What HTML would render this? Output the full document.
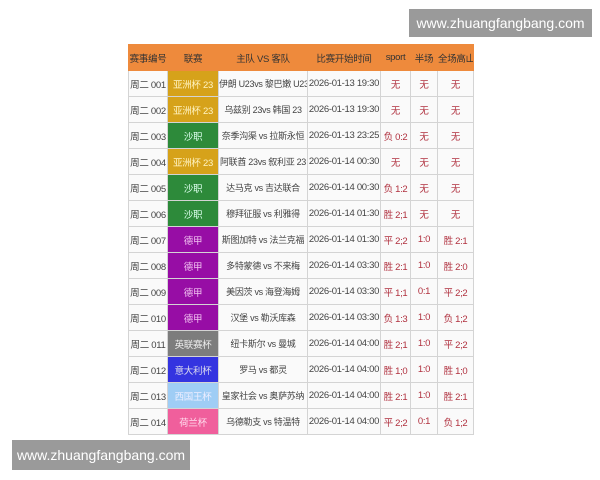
<!DOCTYPE html>
<html><head><meta charset="utf-8"><style>
body{margin:0;width:600px;height:480px;background:#fff;position:relative;overflow:hidden;font-family:"Liberation Sans","Noto Sans CJK SC",sans-serif}
table{position:absolute;left:128px;top:44px;width:345px;border-collapse:collapse;table-layout:fixed;font-size:9.5px;letter-spacing:-0.3px;color:#444}
td{border:1px solid #d4d4d4;height:25px;padding:0;text-align:center;white-space:nowrap;overflow:hidden;background:#fafafa}
td:nth-child(3){font-size:9px}
tr.h td{background:#ee8a3c;color:#333;border-color:#ee8a3c;height:25px}
tr.h td:nth-child(3){font-size:9.5px}
td.r{color:#b0303e}
.y{background:#d6a21a!important;color:#fff3c0}
.g{background:#2d8a3a!important;color:#dfe}
.p{background:#970da5!important;color:#f0c0f0}
.gr{background:#7d7d7d!important;color:#eee}
.b{background:#3434e0!important;color:#dde}
.lb{background:#9fcdf5!important;color:#eef}
.pk{background:#f05f9c!important;color:#fde}
.wm{position:absolute;background:#9a9a9a;color:#fff;font-size:14px;display:flex;align-items:center;justify-content:center}
</style></head><body>
<table>
<colgroup><col style="width:39px"><col style="width:51px"><col style="width:89px"><col style="width:73px"><col style="width:30px"><col style="width:27px"><col style="width:36px"></colgroup>
<tr class="h"><td>赛事编号</td><td>联赛</td><td>主队 VS 客队</td><td>比赛开始时间</td><td>sport</td><td>半场</td><td>全场高山</td></tr>
<tr><td>周二 001</td><td class="y">亚洲杯 23</td><td>伊朗 U23vs 黎巴嫩 U23</td><td>2026-01-13 19:30</td><td class="r">无</td><td class="r">无</td><td class="r">无</td></tr>
<tr><td>周二 002</td><td class="y">亚洲杯 23</td><td>乌兹别 23vs 韩国 23</td><td>2026-01-13 19:30</td><td class="r">无</td><td class="r">无</td><td class="r">无</td></tr>
<tr><td>周二 003</td><td class="g">沙职</td><td>奈季沟渠 vs 拉斯永恒</td><td>2026-01-13 23:25</td><td class="r">负 0:2</td><td class="r">无</td><td class="r">无</td></tr>
<tr><td>周二 004</td><td class="y">亚洲杯 23</td><td>阿联酋 23vs 叙利亚 23</td><td>2026-01-14 00:30</td><td class="r">无</td><td class="r">无</td><td class="r">无</td></tr>
<tr><td>周二 005</td><td class="g">沙职</td><td>达马克 vs 吉达联合</td><td>2026-01-14 00:30</td><td class="r">负 1:2</td><td class="r">无</td><td class="r">无</td></tr>
<tr><td>周二 006</td><td class="g">沙职</td><td>穆拜征服 vs 利雅得</td><td>2026-01-14 01:30</td><td class="r">胜 2;1</td><td class="r">无</td><td class="r">无</td></tr>
<tr><td>周二 007</td><td class="p">德甲</td><td>斯图加特 vs 法兰克福</td><td>2026-01-14 01:30</td><td class="r">平 2;2</td><td class="r">1:0</td><td class="r">胜 2:1</td></tr>
<tr><td>周二 008</td><td class="p">德甲</td><td>多特蒙德 vs 不来梅</td><td>2026-01-14 03:30</td><td class="r">胜 2:1</td><td class="r">1:0</td><td class="r">胜 2:0</td></tr>
<tr><td>周二 009</td><td class="p">德甲</td><td>美因茨 vs 海登海姆</td><td>2026-01-14 03:30</td><td class="r">平 1;1</td><td class="r">0:1</td><td class="r">平 2;2</td></tr>
<tr><td>周二 010</td><td class="p">德甲</td><td>汉堡 vs 勒沃库森</td><td>2026-01-14 03:30</td><td class="r">负 1:3</td><td class="r">1:0</td><td class="r">负 1;2</td></tr>
<tr><td>周二 011</td><td class="gr">英联赛杯</td><td>纽卡斯尔 vs 曼城</td><td>2026-01-14 04:00</td><td class="r">胜 2;1</td><td class="r">1:0</td><td class="r">平 2;2</td></tr>
<tr><td>周二 012</td><td class="b">意大利杯</td><td>罗马 vs 都灵</td><td>2026-01-14 04:00</td><td class="r">胜 1;0</td><td class="r">1:0</td><td class="r">胜 1;0</td></tr>
<tr><td>周二 013</td><td class="lb">西国王杯</td><td>皇家社会 vs 奥萨苏纳</td><td>2026-01-14 04:00</td><td class="r">胜 2:1</td><td class="r">1:0</td><td class="r">胜 2:1</td></tr>
<tr><td>周二 014</td><td class="pk">荷兰杯</td><td>乌德勒支 vs 特温特</td><td>2026-01-14 04:00</td><td class="r">平 2;2</td><td class="r">0:1</td><td class="r">负 1;2</td></tr>
</table>
<div class="wm" style="left:409px;top:9px;width:183px;height:28px">www.zhuangfangbang.com</div>
<div class="wm" style="left:12px;top:440px;width:178px;height:30px">www.zhuangfangbang.com</div>
</body></html>
